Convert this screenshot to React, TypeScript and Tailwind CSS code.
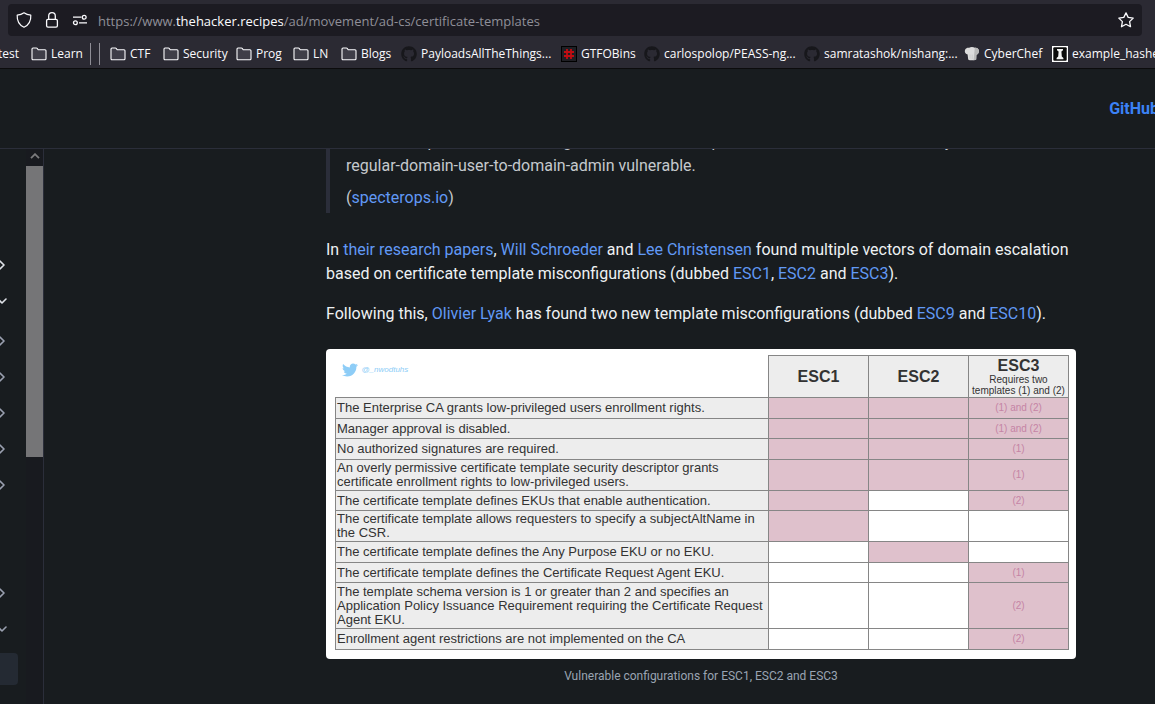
import type { ReactNode } from "react";
import { FaGithub, FaTwitter } from "react-icons/fa";

function ShieldIcon() {
  return (
    <svg viewBox="0 0 16 16" className="size-4" fill="none" stroke="#fbfbfe" strokeWidth="1.2" strokeLinejoin="round">
      <path d="M8 .8 C6 2.3 3.8 3 1.2 3.2 C.9 8.6 3.2 13 8 15.2 C12.8 13 15.1 8.6 14.8 3.2 C12.2 3 10 2.3 8 .8 Z" />
    </svg>
  );
}

function LockIcon() {
  return (
    <svg viewBox="0 0 16 16" className="size-4" fill="none" stroke="#fbfbfe" strokeWidth="1.3">
      <rect x="2.6" y="7.4" width="10.8" height="7.8" rx="1.4" />
      <path d="M4.7 7.2 V4 a3.3 3.3 0 0 1 6.6 0 V7.2" />
    </svg>
  );
}

function PermissionsIcon() {
  return (
    <svg viewBox="0 0 16 16" className="size-4" fill="none" stroke="#fbfbfe" strokeWidth="1.3">
      <path d="M1 5.2 H9.4 M7 10.8 H15" />
      <circle cx="12.2" cy="5.2" r="1.9" />
      <circle cx="3.4" cy="10.8" r="1.9" />
    </svg>
  );
}

function StarIcon() {
  return (
    <svg viewBox="0 0 16 16" className="size-4" fill="none" stroke="#fbfbfe" strokeWidth="1.3" strokeLinejoin="round">
      <path d="M8 .9 L10.2 5.4 L15.2 6.1 L11.6 9.6 L12.5 14.7 L8 12.3 L3.5 14.7 L4.4 9.6 L.8 6.1 L5.8 5.4 Z" />
    </svg>
  );
}

function FolderIcon() {
  return (
    <svg viewBox="0 0 16 16" className="size-4 shrink-0" fill="#3f3e48" stroke="#fbfbfe" strokeWidth="1.1" strokeLinejoin="round">
      <path d="M1 12.8 V3 a1 1 0 0 1 1 -1 H5.4 a1 1 0 0 1 .8 .4 L7.2 3.8 H14 a1 1 0 0 1 1 1 V12.8 a1 1 0 0 1 -1 1 H2 a1 1 0 0 1 -1 -1 Z" />
    </svg>
  );
}

function HashIcon() {
  return (
    <svg viewBox="0 0 16 16" className="size-4 shrink-0">
      <rect width="16" height="16" fill="#000000" />
      <rect x="1" y="1" width="14" height="14" fill="#1f1f24" />
      <path d="M6 3 V13 M10 3 V13 M3 6 H13 M3 10 H13" stroke="#c00d12" strokeWidth="1.8" />
    </svg>
  );
}

function ChefIcon() {
  return (
    <svg viewBox="0 0 16 16" className="size-4 shrink-0">
      <path d="M3.6 8.6 C1 8 .2 5.6 1.2 3.6 C2 2 3.8 1.4 5.2 1.8 C6.4 .6 9.4 .6 10.8 1.8 C12.6 1.2 14.6 2.4 15 4.4 C15.2 6.6 14 8.2 12.4 8.8 L12.2 13.4 C10 14.6 6 14.6 4.2 13.4 Z" fill="#dcdcdc" />
      <path d="M10.8 1.8 C12.6 1.2 14.6 2.4 15 4.4 C15.2 6.6 14 8.2 12.4 8.8 L12.2 13.4 L9.6 14.2 Z" fill="#b9b9b9" />
      <path d="M6 8.4 V12.6 M8.2 8.6 V13" stroke="#c6c6c6" strokeWidth=".7" />
    </svg>
  );
}

function HashcatIcon() {
  return (
    <svg viewBox="0 0 16 16" className="size-4 shrink-0">
      <rect width="16" height="16" fill="#ffffff" />
      <rect x="1.3" y="1.3" width="13.4" height="13.4" rx="1" fill="#0b0b0b" />
      <path d="M5 3 H11 V4.2 L9.4 5.6 L9.8 10.6 L11.4 12 V13.2 H4.6 V12 L6.2 10.6 L6.6 5.6 L5 4.2 Z" fill="#f4f4f4" />
    </svg>
  );
}

const octocat = <FaGithub className="size-4 shrink-0 text-[#17171b]" />;

type Bookmark = { label: string; icon: ReactNode; width: string };

const bookmarks: Bookmark[] = [
  { label: "CTF", icon: <FolderIcon />, width: "w-[53px]" },
  { label: "Security", icon: <FolderIcon />, width: "w-[73px]" },
  { label: "Prog", icon: <FolderIcon />, width: "w-[57px]" },
  { label: "LN", icon: <FolderIcon />, width: "w-[48px]" },
  { label: "Blogs", icon: <FolderIcon />, width: "w-[60px]" },
  { label: "PayloadsAllTheThings...", icon: octocat, width: "w-[160px]" },
  { label: "GTFOBins", icon: <HashIcon />, width: "w-[83px]" },
  { label: "carlospolop/PEASS-ng...", icon: octocat, width: "w-[160px]" },
  { label: "samratashok/nishang:...", icon: octocat, width: "w-[160px]" },
  { label: "CyberChef", icon: <ChefIcon />, width: "w-[88px]" },
  { label: "example_hashes", icon: <HashcatIcon />, width: "w-[120px]" },
];

function BookmarkButton({ label, icon, width }: Bookmark) {
  return (
    <button type="button" className={`flex shrink-0 items-center gap-1 whitespace-nowrap ${width}`}>
      {icon}
      {label}
    </button>
  );
}

function BrowserChrome() {
  return (
    <div className="shrink-0 border-b border-[#0c0c0d] bg-[#2b2a33] font-['Open_Sans','Noto_Sans',sans-serif] text-[#fbfbfe]">
      <div className="pt-1 pr-[13px] pl-2">
        <div className="relative flex h-8 items-center rounded bg-[#1c1b22] px-2">
          <div className="flex gap-3">
            <ShieldIcon />
            <LockIcon />
            <PermissionsIcon />
          </div>
          <div className="ml-[10px] flex-1 pt-px text-[13px] whitespace-nowrap text-[#8f8f98]">
            https://www.<span className="text-[#fbfbfe]">thehacker.recipes</span>
            /ad/movement/ad-cs/certificate-templates
          </div>
          <input aria-label="Address" className="absolute inset-y-0 right-10 left-[90px] bg-transparent outline-none" />
          <button type="button" aria-label="Bookmark this page">
            <StarIcon />
          </button>
        </div>
      </div>
      <div className="flex h-8 items-center overflow-hidden pt-1 text-[12px] leading-4">
        <button type="button" className="flex w-[31px] shrink-0 justify-end pr-3 whitespace-nowrap">
          test
        </button>
        <BookmarkButton label="Learn" icon={<FolderIcon />} width="w-[59px]" />
        <div className="mr-2 h-[22px] w-px shrink-0 bg-[#8f8e96]" />
        <div className="mr-[10px] h-[22px] w-px shrink-0 bg-[#8f8e96]" />
        {bookmarks.map((b) => (
          <BookmarkButton key={b.label} {...b} />
        ))}
      </div>
    </div>
  );
}

function Chevron({ down }: { down?: boolean }) {
  return (
    <svg viewBox="0 0 24 24" className="size-4 shrink-0" fill="none" stroke="currentColor" strokeWidth="2.4" strokeLinecap="round" strokeLinejoin="round">
      <path d={down ? "M6 9 l6 6 l6 -6" : "M9 18 l6 -6 l-6 -6"} />
    </svg>
  );
}

function NavRow({ kind, tone = "text-[#9aa0b0]" }: { kind: "closed" | "open" | "leaf"; tone?: string }) {
  if (kind === "leaf") return <div className="h-8" />;
  return (
    <button
      type="button"
      aria-label={kind === "open" ? "Collapse section" : "Expand section"}
      className={`flex h-8 items-center justify-end pr-2 ${tone}`}
    >
      <Chevron down={kind === "open"} />
    </button>
  );
}

function Sidebar() {
  return (
    <aside className="flex w-11 shrink-0 overflow-hidden border-r border-[#2b2e3a]">
      <nav className="flex w-[26px] flex-col gap-1 pt-[100px] pr-2">
        <NavRow kind="closed" tone="text-[#dfe2e8]" />
        <NavRow kind="open" tone="text-[#dfe2e8]" />
        <div className="mt-1 flex flex-col gap-1">
          <NavRow kind="closed" />
          <NavRow kind="closed" />
          <NavRow kind="closed" />
          <NavRow kind="closed" />
          <NavRow kind="closed" />
          <NavRow kind="leaf" />
          <NavRow kind="leaf" />
          <NavRow kind="closed" />
          <NavRow kind="open" />
          <div className="mt-1 h-8 rounded-r bg-[#242a33]" />
        </div>
      </nav>
      <div className="flex w-[17px] flex-col bg-[#181a1f]">
        <div className="flex h-[17px] items-center justify-center pb-1">
          <svg viewBox="0 0 10 6" className="h-[6px] w-[10px]" fill="none" stroke="#7b7b7d" strokeWidth="1.8">
            <path d="M1 5.2 L5 1.2 L9 5.2" />
          </svg>
        </div>
        <div className="h-[291px] bg-[#757577]" />
      </div>
    </aside>
  );
}

type Mark = boolean | string;

const rows: { text: string; height: string; marks: [Mark, Mark, Mark] }[] = [
  { text: "The Enterprise CA grants low-privileged users enrollment rights.", height: "h-[21px]", marks: [true, true, "(1) and (2)"] },
  { text: "Manager approval is disabled.", height: "h-[20px]", marks: [true, true, "(1) and (2)"] },
  { text: "No authorized signatures are required.", height: "h-[21px]", marks: [true, true, "(1)"] },
  { text: "An overly permissive certificate template security descriptor grants certificate enrollment rights to low-privileged users.", height: "h-[31px]", marks: [true, true, "(1)"] },
  { text: "The certificate template defines EKUs that enable authentication.", height: "h-[20px]", marks: [true, false, "(2)"] },
  { text: "The certificate template allows requesters to specify a subjectAltName in the CSR.", height: "h-[31px]", marks: [true, false, false] },
  { text: "The certificate template defines the Any Purpose EKU or no EKU.", height: "h-[21px]", marks: [false, true, false] },
  { text: "The certificate template defines the Certificate Request Agent EKU.", height: "h-[20px]", marks: [false, false, "(1)"] },
  { text: "The template schema version is 1 or greater than 2 and specifies an Application Policy Issuance Requirement requiring the Certificate Request Agent EKU.", height: "h-[46px]", marks: [false, false, "(2)"] },
  { text: "Enrollment agent restrictions are not implemented on the CA", height: "h-[21px]", marks: [false, false, "(2)"] },
];

function MatrixTable() {
  return (
    <div className="rounded bg-white pt-[6px] pr-[7px] pb-[9px] pl-[9px] font-['Liberation_Sans',Arial,sans-serif]">
      <table className="w-full table-fixed border-collapse text-[#333333]">
        <colgroup>
          <col />
          <col className="w-[100px]" />
          <col className="w-[100px]" />
          <col className="w-[100px]" />
        </colgroup>
        <thead>
          <tr className="h-[42px]">
            <td className="p-0 pl-[6px] align-top">
              <div className="flex items-center gap-1 pt-[6px] text-[#8ecdf7]">
                <FaTwitter className="size-4" />
                <span className="text-[8px] leading-4 italic">@_nwodtuhs</span>
              </div>
            </td>
            <th className="border border-[#868686] bg-[#ededed] p-0 text-[16px] leading-4">ESC1</th>
            <th className="border border-[#868686] bg-[#ededed] p-0 text-[16px] leading-4">ESC2</th>
            <th className="border border-[#868686] bg-[#ededed] p-0 text-[16px] leading-4">
              ESC3
              <div className="text-[10px] leading-[11px] font-normal">
                Requires two
                <br />
                templates (1) and (2)
              </div>
            </th>
          </tr>
        </thead>
        <tbody>
          {rows.map((row) => (
            <tr key={row.text} className={row.height}>
              <th scope="row" className="border border-[#868686] bg-[#ededed] p-0 pl-px text-left text-[13px] leading-[14px] font-normal">
                {row.text}
              </th>
              {row.marks.map((mark, i) => (
                <td
                  key={i}
                  className={`border border-[#868686] p-0 text-center text-[10px] leading-[14px] text-[#c584a5] ${mark ? "bg-[#dfc1cc]" : "bg-white"}`}
                >
                  {mark}
                </td>
              ))}
            </tr>
          ))}
        </tbody>
      </table>
    </div>
  );
}

function Link({ children }: { children: ReactNode }) {
  return (
    <a href="#" className="text-[#6199f5]">
      {children}
    </a>
  );
}

export default function App() {
  return (
    <div className="flex h-screen flex-col overflow-hidden bg-[#181c1f] font-[Roboto,sans-serif] text-[16px] leading-6 text-[#eef1f3]">
      <BrowserChrome />
      <header className="flex h-20 shrink-0 items-center justify-end overflow-hidden border-b border-[#2b2e3a]">
        <a href="#" className="-mr-1 font-bold text-[#3b82f6]">
          GitHub
        </a>
      </header>
      <div className="flex min-h-0 flex-1">
        <Sidebar />
        <main className="flex-1 overflow-hidden pr-[79px] pl-[282px]">
          <div className="max-w-[750px]">
            <blockquote className="-mt-[19px] border-l-4 border-[#2b2e3a] pb-[3px] pl-4 text-[#c5c9cd]">
              <p>
                There is a specific set of settings for certificate templates that makes them extremely vulnerable. As in
                regular-domain-user-to-domain-admin vulnerable.
              </p>
              <p className="mt-2">
                (<Link>specterops.io</Link>)
              </p>
            </blockquote>
            <p className="mt-[25px]">
              In <Link>their research papers</Link>, <Link>Will Schroeder</Link> and <Link>Lee Christensen</Link> found
              multiple vectors of domain escalation based on certificate template misconfigurations (dubbed{" "}
              <Link>ESC1</Link>, <Link>ESC2</Link> and <Link>ESC3</Link>).
            </p>
            <p className="mt-4">
              Following this, <Link>Olivier Lyak</Link> has found two new template misconfigurations (dubbed{" "}
              <Link>ESC9</Link> and <Link>ESC10</Link>).
            </p>
            <figure className="mt-[23px]">
              <MatrixTable />
              <figcaption className="mt-2 text-center text-[12px] leading-[18px] text-[#9aa4b2]">
                Vulnerable configurations for ESC1, ESC2 and ESC3
              </figcaption>
            </figure>
          </div>
        </main>
      </div>
    </div>
  );
}
